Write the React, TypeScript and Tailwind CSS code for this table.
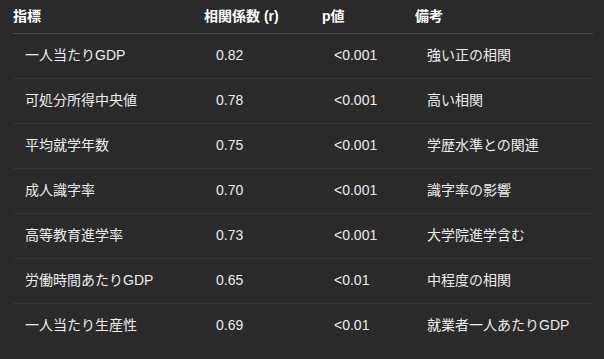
import React from 'react';

interface Row {
  name: string;
  r: string;
  p: string;
  note: string;
}

const rows: Row[] = [
  { name: '一人当たりGDP', r: '0.82', p: '<0.001', note: '強い正の相関' },
  { name: '可処分所得中央値', r: '0.78', p: '<0.001', note: '高い相関' },
  { name: '平均就学年数', r: '0.75', p: '<0.001', note: '学歴水準との関連' },
  { name: '成人識字率', r: '0.70', p: '<0.001', note: '識字率の影響' },
  { name: '高等教育進学率', r: '0.73', p: '<0.001', note: '大学院進学含む' },
  { name: '労働時間あたりGDP', r: '0.65', p: '<0.01', note: '中程度の相関' },
  { name: '一人当たり生産性', r: '0.69', p: '<0.01', note: '就業者一人あたりGDP' },
];

const App: React.FC = () => {
  return (
    <div
      className="w-[604px] h-[359px] bg-[#2a2a2a] pl-[13px] pr-[11px] text-[14px] text-[#ececec]"
      style={{ fontFamily: '"Liberation Sans", "Noto Sans CJK JP", sans-serif' }}
    >
      <table className="w-[580px] table-fixed border-collapse">
        <colgroup>
          <col className="w-[191px]" />
          <col className="w-[118px]" />
          <col className="w-[93px]" />
          <col className="w-[178px]" />
        </colgroup>
        <thead>
          <tr className="h-[33px] border-b border-[#4a4a4a]">
            <th className="p-0 text-left font-bold text-white align-middle">指標</th>
            <th className="p-0 text-left font-bold text-white align-middle">相関係数 (r)</th>
            <th className="p-0 text-left font-bold text-white align-middle">p値</th>
            <th className="p-0 text-left font-bold text-white align-middle">備考</th>
          </tr>
        </thead>
        <tbody>
          {rows.map((row, i) => (
            <tr
              key={row.name}
              className={`h-[45px] ${i < rows.length - 1 ? 'border-b border-[#363636]' : ''}`}
            >
              <td className="pl-3 py-0 align-middle whitespace-nowrap">{row.name}</td>
              <td className="pl-3 py-0 align-middle">{row.r}</td>
              <td className="pl-3 py-0 align-middle">{row.p}</td>
              <td className="pl-3 py-0 align-middle whitespace-nowrap">{row.note}</td>
            </tr>
          ))}
        </tbody>
      </table>
    </div>
  );
};

export default App;
